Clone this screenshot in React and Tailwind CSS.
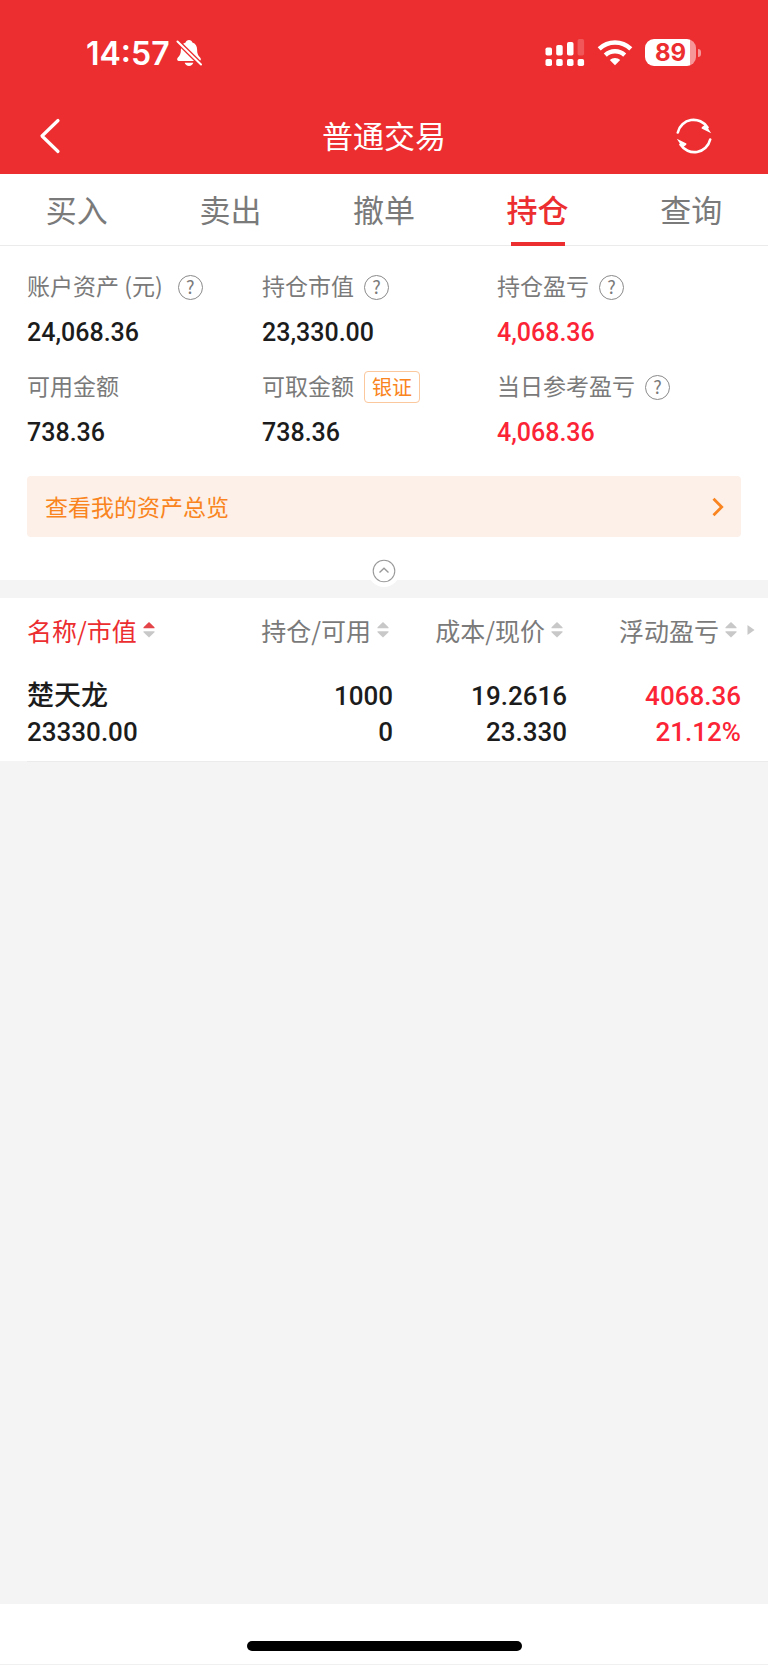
import React, { useState } from 'react';

const tabs = ['买入', '卖出', '撤单', '持仓', '查询'];

const assets = [
  { label: '账户资产 (元)\u00a0', value: '24,068.36', help: true },
  { label: '持仓市值', value: '23,330.00', help: true },
  { label: '持仓盈亏', value: '4,068.36', help: true, up: true },
  { label: '可用金额', value: '738.36' },
  { label: '可取金额', value: '738.36', tag: '银证' },
  { label: '当日参考盈亏', value: '4,068.36', help: true, up: true },
];

const columns = ['名称/市值', '持仓/可用', '成本/现价', '浮动盈亏'];

const holdings = [
  {
    name: '楚天龙',
    marketValue: '23330.00',
    position: '1000',
    available: '0',
    cost: '19.2616',
    price: '23.330',
    profit: '4068.36',
    profitRate: '21.12%',
  },
];

const BellOffIcon = () => (
  <svg width="26" height="28" viewBox="0 0 26 28" aria-hidden="true">
    <path
      d="M13 1c-1.8 0-3 1-3.400 2.400C6.300 4.500 4.900 7.300 4.900 10.400c0 4.200-.9 6-3 8.200C.700 20 .900 21.900 2.600 21.900h20.800c1.700 0 1.900-1.900.7-3.300-2.100-2.200-3-4-3-8.200 0-3.100-1.400-5.900-4.700-7C16 2 14.800 1 13 1z"
      fill="#fff"
    />
    <path d="M8.700 23.800h8.600c-.5 2-2.200 3.200-4.300 3.200s-3.800-1.200-4.300-3.200z" fill="#fff" />
    <path d="M0 1L26 26.500" stroke="#ec2e30" strokeWidth="4.800" />
    <path d="M1.500 2.500L25 25.500" stroke="#fff" strokeWidth="2" strokeLinecap="round" />
  </svg>
);

const SignalIcon = () => (
  <svg width="40" height="28" viewBox="0 0 40 28" fill="#fff" aria-hidden="true">
    <rect x="0.500" y="8.500" width="6.500" height="8" rx="1.800" />
    <rect x="11.200" y="6" width="6.500" height="10.500" rx="1.800" />
    <rect x="22" y="3" width="6.500" height="13.500" rx="1.800" />
    <rect x="32.600" y="0" width="6.500" height="16.500" rx="1.800" opacity="0.200" />
    <rect x="0.500" y="20" width="6.500" height="7" rx="1.800" />
    <rect x="11.200" y="20" width="6.500" height="7" rx="1.800" />
    <rect x="22" y="20" width="6.500" height="7" rx="1.800" />
    <rect x="32.600" y="20" width="6.500" height="7" rx="1.800" />
  </svg>
);

const WifiIcon = () => (
  <svg width="36" height="26" viewBox="0 0 36 26" fill="none" stroke="#fff" strokeWidth="4.400" aria-hidden="true">
    <path d="M2.200 8.900C6.500 4.800 12 2.500 18 2.500s11.500 2.300 15.800 6.400" />
    <path d="M8.300 15.100c2.600-2.500 6-3.900 9.700-3.900s7.100 1.400 9.700 3.900" />
    <path d="M18 25.200l-5.200-5.100c1.400-1.300 3.200-2.100 5.200-2.100s3.800.8 5.200 2.100z" fill="#fff" stroke="none" />
  </svg>
);

const RefreshIcon = () => (
  <svg width="36" height="36" viewBox="0 0 36 36" fill="none" aria-hidden="true">
    <path d="M1.800 14.500A16.300 16.300 0 0 1 31.500 9.500" stroke="#fff" strokeWidth="2.600" strokeLinecap="round" />
    <path d="M34.200 21.500A16.300 16.300 0 0 1 4.500 26.500" stroke="#fff" strokeWidth="2.600" strokeLinecap="round" />
    <path d="M29.500 6.500L35.200 15.300L25.600 10.500Q25.200 9.300 27 8.200z" fill="#fff" />
    <path d="M6.500 29.500L0.800 20.700L10.400 25.500Q10.800 26.700 9 27.800z" fill="#fff" />
  </svg>
);

const SortIcon = ({ active }) => (
  <svg width="12" height="16" viewBox="0 0 12 16" aria-hidden="true">
    <path d="M6 0L11.500 5.200V6.300H0.500V5.200z" fill={active ? '#e34548' : '#c8c8c8'} />
    <path d="M6 15.500L11.500 10.300V9.200H0.500V10.300z" fill="#c8c8c8" />
  </svg>
);

const StatusBar = () => (
  <div className="flex h-[105px] items-center justify-between pr-[67px] pl-[86px] text-white">
    <div className="flex items-center gap-1.5">
      <span className="pt-0.5 font-['Inter',sans-serif] text-[32px] leading-8 font-semibold">14:57</span>
      <BellOffIcon />
    </div>
    <div className="flex items-center gap-3">
      <SignalIcon />
      <WifiIcon />
      <div className="flex items-center gap-0.5">
        <div className="flex h-[27px] w-[51px] items-center justify-center rounded-[9px] bg-[linear-gradient(90deg,#fff_88%,#f69698_88%)] pt-px font-['Inter',sans-serif] text-2xl leading-6 font-bold text-[#ec2e30]">
          89
        </div>
        <div className="h-2 w-[3px] rounded-r-full bg-[#f69698]" />
      </div>
    </div>
  </div>
);

const AssetItem = ({ item }) => (
  <div>
    <div className="flex h-8 items-center gap-[10px] text-[23px] leading-8 text-[#7a7a7a]">
      <span className="pb-1 whitespace-nowrap">{item.label}</span>
      {item.help && (
        <button
          aria-label="说明"
          className="flex size-[25px] shrink-0 items-center justify-center rounded-full border border-[#8a8a8a] pb-0.5 text-lg leading-none"
        >
          ?
        </button>
      )}
      {item.tag && (
        <button className="h-8 shrink-0 rounded-sm border border-[#fbc79c] px-[7px] text-[20px] leading-7 text-[#f98420]">
          {item.tag}
        </button>
      )}
    </div>
    <div
      className={`mt-[14px] font-['Roboto',sans-serif] text-[25px] leading-8 font-medium ${
        item.up ? 'text-[#fb2436]' : 'text-[#1c1c1c]'
      }`}
    >
      {item.value}
    </div>
  </div>
);

const App = () => {
  const [activeTab, setActiveTab] = useState('持仓');
  const [sortBy, setSortBy] = useState('名称/市值');

  return (
    <div className="flex min-h-screen flex-col bg-[#f4f4f4] font-['Noto_Sans_CJK_SC',sans-serif]">
      <header className="bg-[#ec2e30] pb-2">
        <StatusBar />
        <div className="flex h-[61px] items-center justify-between pr-[56px] pl-[39px] text-white">
          <button aria-label="返回" className="w-[53px]">
            <svg width="22" height="36" viewBox="0 0 22 36" fill="none" stroke="#fff" strokeWidth="3.200" strokeLinecap="round" strokeLinejoin="round" aria-hidden="true">
              <path d="M19 2.500L3 18L19 33.500" />
            </svg>
          </button>
          <h1 className="pb-0.5 text-[31px] leading-10">普通交易</h1>
          <button aria-label="刷新">
            <RefreshIcon />
          </button>
        </div>
      </header>

      {/* Tabs */}
      <nav className="flex h-[72px] border-b border-[#ebebeb] bg-white">
        {tabs.map((tab) => (
          <button
            key={tab}
            onClick={() => setActiveTab(tab)}
            className={`relative flex-1 pb-0.5 text-[31px] leading-10 ${
              tab === activeTab ? 'font-medium text-[#ec2e30]' : 'text-[#7a7a7a]'
            }`}
          >
            {tab}
            {tab === activeTab && (
              <span className="absolute -bottom-px left-1/2 h-1 w-[54px] -translate-x-1/2 bg-[#ec2e30]" />
            )}
          </button>
        ))}
      </nav>

      {/* Assets */}
      <section className="relative bg-white pt-[25px] pb-[43px]">
        <div className="grid grid-cols-3 gap-y-[22px] pr-9 pl-[27px]">
          {assets.map((item) => (
            <AssetItem key={item.label} item={item} />
          ))}
        </div>

        <a
          href="#overview"
          className="mx-[27px] mt-[27px] flex h-[61px] items-center justify-between rounded-sm bg-[#fcf0e8] pr-[17px] pl-[18px] text-[23px] leading-8 text-[#f98420]"
        >
          <span className="pb-0.5">查看我的资产总览</span>
          <svg width="12" height="20" viewBox="0 0 12 20" fill="none" stroke="#f98420" strokeWidth="2.800" aria-hidden="true">
            <path d="M1.500 1.800L9.700 10L1.500 18.200" />
          </svg>
        </a>

        {/* Collapse handle */}
        <button
          aria-label="收起"
          className="absolute -bottom-[7px] left-1/2 flex size-8 -translate-x-1/2 items-center justify-center rounded-full bg-white"
        >
          <svg width="24" height="24" viewBox="0 0 24 24" fill="none" stroke="#999" aria-hidden="true">
            <circle cx="12" cy="12" r="10.800" strokeWidth="1.100" />
            <path d="M7.500 13.500L12 9.200L16.500 13.500" strokeWidth="1.400" />
          </svg>
        </button>
      </section>

      {/* Holdings */}
      <section className="mt-[18px] bg-white px-[27px]">
        <table className="w-full table-fixed">
          <thead>
            <tr className="h-16">
              {columns.map((col, i) => (
                <th
                  key={col}
                  className={`relative p-0 font-normal ${i === 0 ? 'text-left' : 'w-[174px] text-right'}`}
                >
                  <button
                    onClick={() => setSortBy(col)}
                    className={`inline-flex items-center gap-1.5 pr-1 align-middle text-[25px] leading-9 whitespace-nowrap ${
                      col === sortBy ? 'text-[#ec2e30]' : 'text-[#7a7a7a]'
                    }`}
                  >
                    {col}
                    <SortIcon active={col === sortBy} />
                  </button>
                  {i === columns.length - 1 && (
                    <svg className="absolute top-[27px] left-full ml-1.5" width="8" height="10" viewBox="0 0 8 10" aria-hidden="true">
                      <path d="M0.500 0L7.500 5L0.500 10z" fill="#c8c8c8" />
                    </svg>
                  )}
                </th>
              ))}
            </tr>
          </thead>
          <tbody className="font-['Roboto','Noto_Sans_CJK_SC',sans-serif] text-[26px] leading-9 font-medium text-[#1c1c1c]">
            {holdings.map((row) => (
              <tr key={row.name}>
                <td className="p-0 pt-4 pb-[11px]">
                  <div className="text-[27px] leading-9">{row.name}</div>
                  <div>{row.marketValue}</div>
                </td>
                <td className="p-0 pt-4 pb-[11px] text-right">
                  <div>{row.position}</div>
                  <div>{row.available}</div>
                </td>
                <td className="p-0 pt-4 pb-[11px] text-right">
                  <div>{row.cost}</div>
                  <div>{row.price}</div>
                </td>
                <td className="p-0 pt-4 pb-[11px] text-right text-[#fb2436]">
                  <div>{row.profit}</div>
                  <div>{row.profitRate}</div>
                </td>
              </tr>
            ))}
          </tbody>
        </table>
      </section>
      <div className="ml-[27px] h-px bg-[#ebebeb]" />

      <footer className="mt-auto flex h-[61px] items-end justify-center border-b border-[#f0f0f0] bg-white pb-[13px]">
        <div className="h-[10px] w-[275px] rounded-full bg-black" />
      </footer>
    </div>
  );
};

export default App;
